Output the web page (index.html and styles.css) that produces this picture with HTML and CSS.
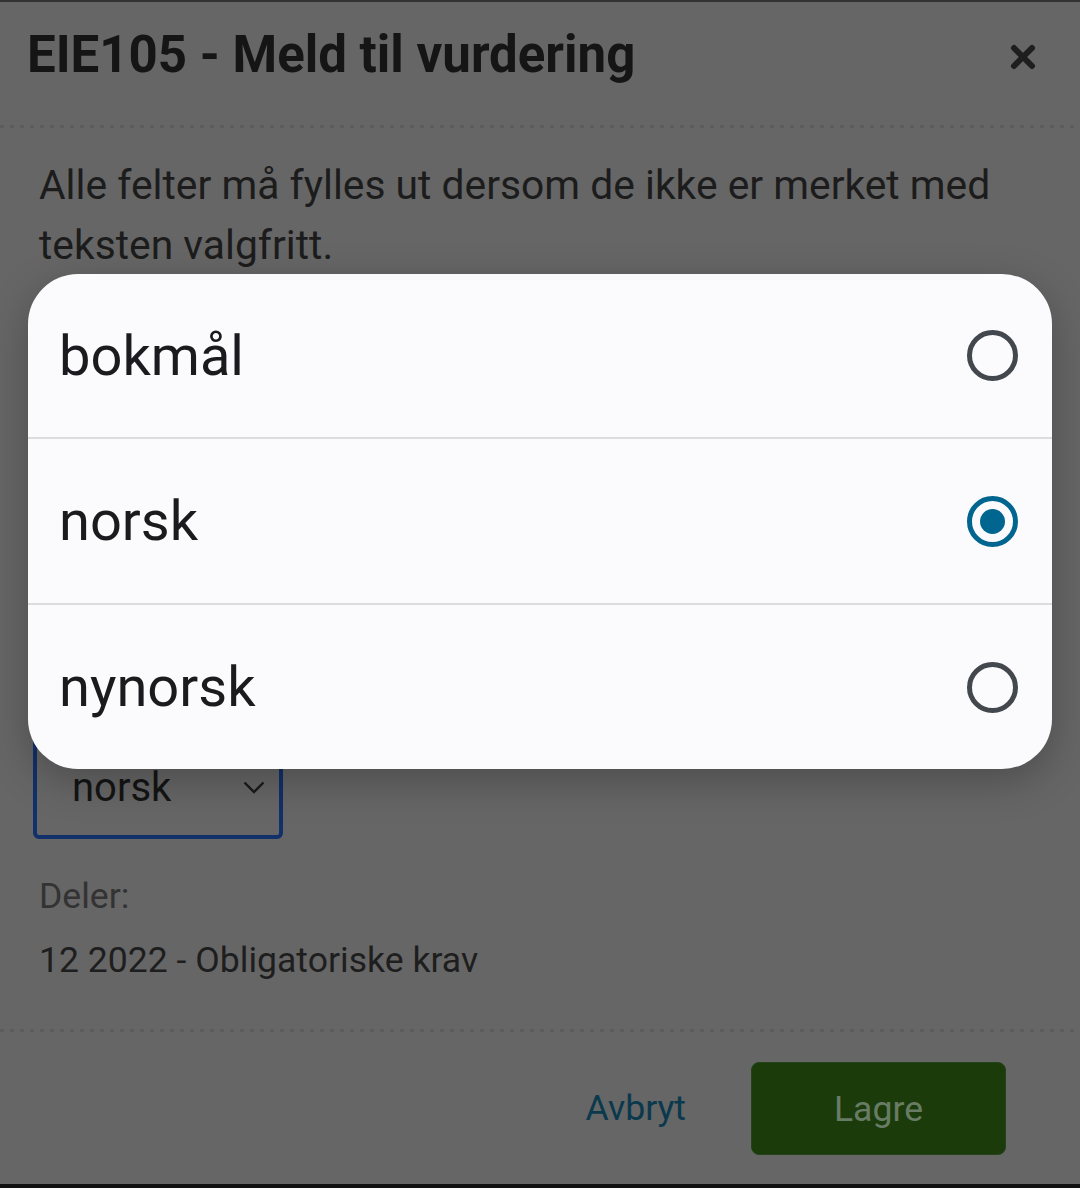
FILE: index.html
```html
<!DOCTYPE html>
<html lang="no">
<head>
<meta charset="utf-8">
<title>EIE105 - Meld til vurdering</title>
<link rel="stylesheet" href="styles.css">
</head>
<body>
<div class="modal">
  <header class="modal-header">
    <h1 class="modal-title">EIE105 - Meld til vurdering</h1>
    <button class="close" aria-label="Lukk">
      <svg viewBox="0 0 28 28" width="28" height="28"><path d="M5 5 L23 23 M23 5 L5 23" stroke="currentColor" stroke-width="6" stroke-linecap="round"/></svg>
    </button>
  </header>
  <div class="divider"></div>
  <main class="modal-body">
    <p class="intro">Alle felter må fylles ut dersom de ikke er merket med teksten valgfritt.</p>
    <div class="field">
      <div class="select" aria-label="Målform">
        <span class="select-value">norsk</span>
        <svg class="chevron" viewBox="0 0 22 13" width="22" height="13"><path d="M1.5 1.5 L11 11 L20.5 1.5" fill="none" stroke="currentColor" stroke-width="2.4"/></svg>
      </div>
    </div>
    <p class="muted">Deler:</p>
    <p class="parts">12 2022 - Obligatoriske krav</p>
  </main>
  <div class="divider"></div>
  <footer class="modal-footer">
    <button class="link-btn">Avbryt</button>
    <button class="primary-btn">Lagre</button>
  </footer>
</div>

<div class="picker" role="listbox">
  <div class="option">
    <span>bokmål</span>
    <span class="radio"></span>
  </div>
  <div class="option">
    <span>norsk</span>
    <span class="radio checked"></span>
  </div>
  <div class="option">
    <span>nynorsk</span>
    <span class="radio"></span>
  </div>
</div>
</body>
</html>
```
FILE: styles.css
```css
* { box-sizing: border-box; }
html, body { margin: 0; padding: 0; }
body {
  width: 1080px;
  height: 1188px;
  background: #111;
  font-family: Roboto, "Liberation Sans", sans-serif;
  position: relative;
  overflow: hidden;
}
.modal {
  height: 1184px;
  background: #666666;
  border-top: 2px solid #333;
  display: flex;
  flex-direction: column;
}
.modal-header {
  display: flex;
  align-items: center;
  justify-content: space-between;
  padding: 23px 43px 40px 27px;
}
.modal-title {
  margin: 0;
  font-size: 51px;
  line-height: 60px;
  font-weight: 700;
  color: #151515;
}
.close {
  border: 0;
  background: none;
  padding: 0;
  color: #1e1e1e;
  width: 28px;
  height: 28px;
  margin-top: 4px;
  display: flex;
}
.divider {
  height: 3px;
  background-image: repeating-linear-gradient(to right, #5c5c5c 0 4px, transparent 4px 10px);
}
.modal-body {
  padding: 27px 40px 0 39px;
  flex: 1;
}
.intro {
  margin: 0;
  font-size: 40.8px;
  line-height: 60px;
  color: #1c1c1c;
}
.field {
  margin-top: 452px;
}
.select {
  width: 250px;
  height: 112px;
  margin-left: -6px;
  border: 4px solid #12306a;
  border-radius: 6px;
  display: flex;
  align-items: center;
  justify-content: space-between;
  padding: 8px 14px 0 35px;
}
.select-value {
  font-size: 40px;
  color: #141414;
}
.chevron { color: #1a1a1a; }
.muted {
  margin: 27px 0 0 0;
  font-size: 35.6px;
  line-height: 60px;
  color: #333;
}
.parts {
  margin: 4px 0 0 0;
  font-size: 35.6px;
  line-height: 60px;
  color: #1e1e1e;
}
.modal-footer {
  height: 152px;
  display: flex;
  align-items: flex-start;
  justify-content: flex-end;
  gap: 65px;
  padding: 30px 74px 0 0;
}
.link-btn {
  border: 0;
  background: none;
  padding: 0;
  font-family: inherit;
  font-size: 35.6px;
  line-height: 93px;
  color: #0a394d;
}
.primary-btn {
  width: 255px;
  height: 93px;
  border: 1px solid #24431a;
  border-radius: 8px;
  background: #1b3b0b;
  color: #687b64;
  font-family: inherit;
  font-size: 35.6px;
}

.picker {
  position: absolute;
  top: 274px;
  left: 28px;
  width: 1024px;
  background: #fbfbfd;
  border-radius: 50px;
  box-shadow: 0 12px 40px rgba(0, 0, 0, 0.25);
  overflow: hidden;
}
.option {
  height: 166px;
  display: flex;
  align-items: center;
  justify-content: space-between;
  padding: 0 34px 0 31px;
  font-size: 56px;
  color: #1b1b1f;
}
.option:first-child { height: 163px; }
.option + .option { border-top: 2.5px solid #dcdcdf; }
.radio {
  width: 51px;
  height: 51px;
  border-radius: 50%;
  border: 5px solid #43474e;
  position: relative;
}
.radio.checked { border-color: #00658f; }
.radio.checked::after {
  content: "";
  position: absolute;
  left: 8px;
  top: 8px;
  width: 25px;
  height: 25px;
  border-radius: 50%;
  background: #00658f;
}
```
